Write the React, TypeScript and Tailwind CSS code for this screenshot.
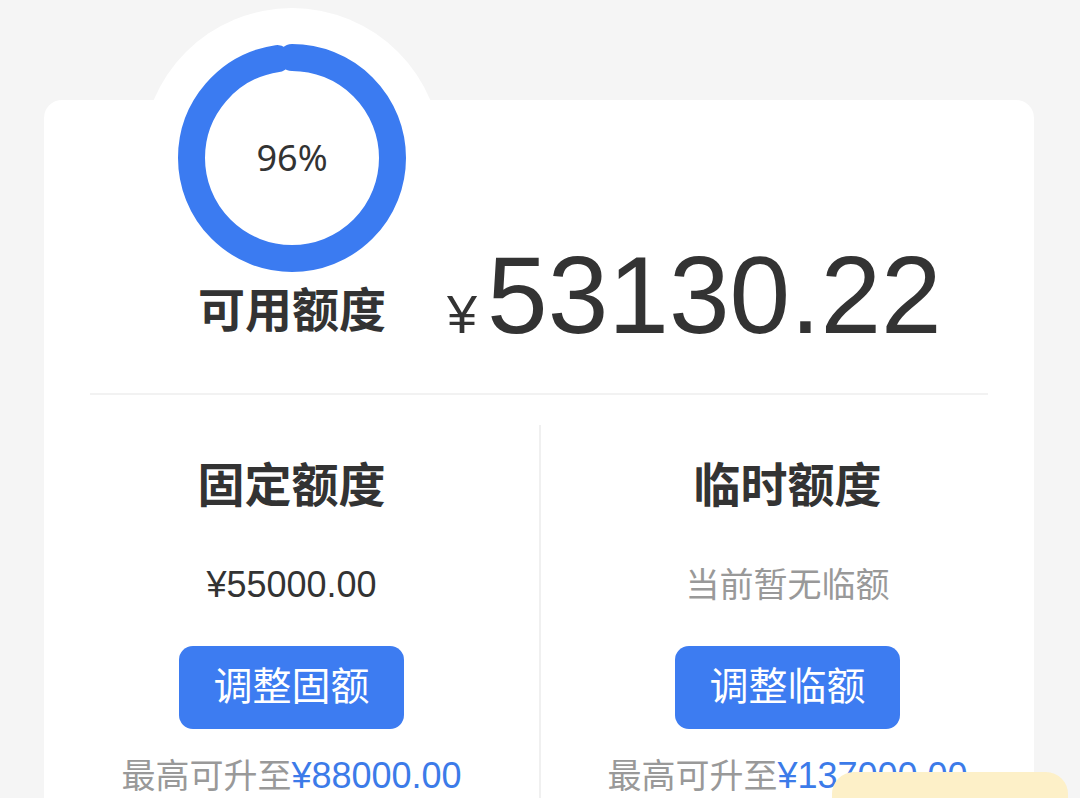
import React from "react";

const FONT = "font-['Liberation_Sans','Noto_Sans_CJK_SC',sans-serif]";

function Ring({ percent }: { percent: number }) {
  const r = 100.5;
  const c = 2 * Math.PI * r;
  // the caps overlap a little more than a plain 96% arc would
  const shown = Math.min(percent + 1.5, 100);
  return (
    <div className="relative w-[228px] h-[228px]">
      <svg width="228" height="228" viewBox="0 0 228 228" className="block">
        <circle
          cx="114"
          cy="114"
          r={r}
          fill="none"
          stroke="#3b7bf1"
          strokeWidth="27"
          strokeLinecap="round"
          strokeDasharray={`${(c * shown) / 100} ${c}`}
          transform="rotate(-90 114 114)"
        />
      </svg>
      <div className="absolute inset-0 flex items-center justify-center text-[36px] text-[#333] font-['Noto_Sans',sans-serif]">
        {percent}%
      </div>
    </div>
  );
}

function QuotaColumn({
  title,
  value,
  muted,
  action,
  max,
  divider,
}: {
  title: string;
  value: string;
  muted?: boolean;
  action: string;
  max: string;
  divider?: boolean;
}) {
  return (
    <div className={`flex flex-col items-center pt-[33px] ${divider ? "border-l-2 border-[#f0f0f0]" : ""}`}>
      <div className="text-[47px] leading-[55px] font-bold text-[#333]">{title}</div>
      <div
        className={`mt-[47px] leading-[50px] ${muted ? "text-[34px] text-[#999]" : "text-[36px] text-[#333]"}`}
      >
        {value}
      </div>
      <button className="mt-[36px] w-[225px] h-[83px] rounded-[14px] bg-[#3d7cf1] text-white text-[39px]">
        {action}
      </button>
      <div className="mt-[22px] leading-[50px] whitespace-nowrap">
        <span className="text-[34px] text-[#999]">最高可升至</span>
        <span className="text-[36px] text-[#3c7be9]">{max}</span>
      </div>
    </div>
  );
}

export default function App() {
  return (
    <div className={`relative h-[798px] overflow-hidden bg-[#f5f5f5] pt-[100px] pl-[44px] ${FONT}`}>
      <div className="relative w-[990px] min-h-[760px] rounded-[18px] bg-white">
        {/* white bump behind ring */}
        <div className="absolute left-[98px] top-[-92px] w-[300px] h-[300px] rounded-full bg-white" />

        {/* Available quota */}
        <div className="relative flex items-end pl-[134px]">
          <div className="flex flex-col items-center -mt-[56px]">
            <Ring percent={96} />
            <div className="mt-[11px] text-[47px] leading-[55px] font-bold text-[#333]">可用额度</div>
          </div>
          <div className="ml-[41px] flex items-baseline text-[#333] leading-none -mb-[12px]">
            <span className="text-[54px] mr-[10px]">¥</span>
            <span className="text-[109px]">53130.22</span>
          </div>
        </div>

        <div className="mx-[46px] mt-[55px] border-t-2 border-[#f2f2f2]" />

        <div className="mt-[30px] grid grid-cols-2">
          <QuotaColumn title="固定额度" value="¥55000.00" action="调整固额" max="¥88000.00" />
          <QuotaColumn
            title="临时额度"
            value="当前暂无临额"
            muted
            action="调整临额"
            max="¥137000.00"
            divider
          />
        </div>
      </div>

      {/* floating bottom tab */}
      <div className="absolute left-[832px] top-[772px] w-[236px] h-[60px] rounded-t-[22px] bg-[#fdf0c8]" />
    </div>
  );
}
